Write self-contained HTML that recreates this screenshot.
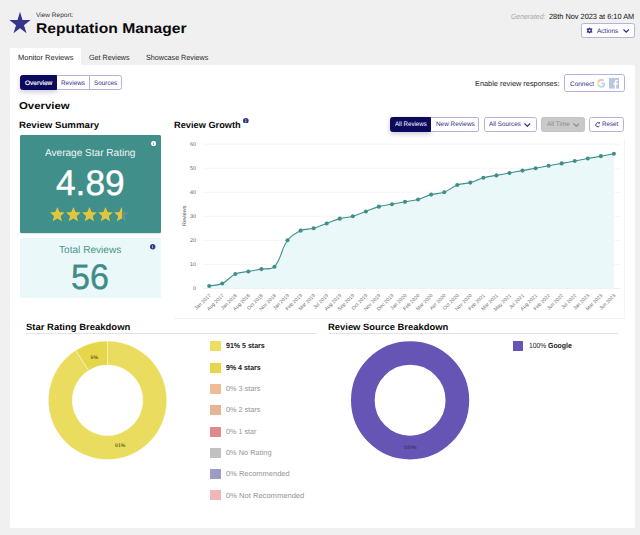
<!DOCTYPE html>
<html lang="en">
<head>
<meta charset="utf-8">
<title>Reputation Manager</title>
<style>
*{box-sizing:border-box;margin:0;padding:0}
html,body{width:640px;height:535px;overflow:hidden;background:#f0f0f0}
body{position:relative;font-family:"Liberation Sans",sans-serif;color:#111}
text{text-rendering:geometricPrecision}
.abs{position:absolute}
.t{position:absolute;white-space:nowrap;line-height:1;transform-origin:0 0;text-rendering:geometricPrecision}
.btn{position:absolute;border:0.7px solid #b4b3dc;background:#fff}
.navy{background:#0c0a5c;border-color:#0c0a5c;box-shadow:0 2px 5px rgba(12,10,92,.22)}
.ax{font-size:5.5px;fill:#666;font-family:"Liberation Sans",sans-serif}
.axx{font-size:5px;fill:#6a6a6a;font-family:"Liberation Sans",sans-serif}
.dl{font-size:5.1px;fill:#2e2c10;font-family:"Liberation Sans",sans-serif}
</style>
</head>
<body>
<svg class="abs" style="left:9.2px;top:10.9px" width="22" height="23.4" viewBox="0 0 22 22" preserveAspectRatio="none"><polygon points="11,0.8 13.5,8.5 21.6,8.5 15,13.3 17.5,21 11,16.2 4.5,21 7,13.3 0.4,8.5 8.5,8.5" fill="#35358c"/></svg>
<div class="t" style="left:35.77px;top:13.10px;font-size:6.39px;color:#333;transform:scaleX(1.0246)">View Report:</div>
<div class="t" style="left:35.89px;top:21.10px;font-size:14.08px;color:#0a0a0a;transform:scaleX(1.1124);font-weight:bold">Reputation Manager</div>
<div class="t" style="left:510.76px;top:13.10px;font-size:7.55px;color:#a8a8a8;transform:scaleX(0.9104);font-style:italic">Generated:</div>
<div class="t" style="left:549.14px;top:13.10px;font-size:7.69px;color:#111;transform:scaleX(0.9582)">28th Nov 2023 at 6:10 AM</div>
<div class="btn" style="left:581.2px;top:23.4px;width:53.5px;height:14.3px;border-radius:2.5px"></div>
<svg class="abs" style="left:585.9px;top:26.9px" width="7.1" height="7.1" viewBox="0 0 24 24"><path fill="#2f2e87" d="M12,1 L14.2,4.3 A8,8 0 0 1 16.6,5.3 L20.5,4.6 L21.9,7 L19.6,10.1 A8,8 0 0 1 19.6,13.9 L21.9,17 L20.5,19.4 L16.6,18.7 A8,8 0 0 1 14.2,19.7 L12,23 L9.800,19.700 A8,8 0 0 1 7.4,18.7 L3.5,19.4 L2.1,17 L4.4,13.9 A8,8 0 0 1 4.4,10.1 L2.1,7 L3.5,4.6 L7.4,5.3 A8,8 0 0 1 9.8,4.3 Z M12,8.600 A3.4,3.4 0 1 0 12,15.400 A3.4,3.4 0 1 0 12,8.600 Z" fill-rule="evenodd"/></svg>
<div class="t" style="left:596.70px;top:29.10px;font-size:6.68px;color:#2f2e87;transform:scaleX(0.9757)">Actions</div>
<svg class="abs" style="left:623.2px;top:28.6px" width="6.4" height="4" viewBox="0 0 6.4 4"><path d="M0.5,0.5 L3.2,3.2 L5.9,0.5" fill="none" stroke="#2f2e87" stroke-width="1.15"/></svg>
<div class="abs" style="left:10px;top:48.1px;width:71.2px;height:18px;background:#fff;border-radius:2px 2px 0 0"></div>
<div class="t" style="left:17.58px;top:54.10px;font-size:7.55px;color:#2a2a2a;transform:scaleX(0.9932)">Monitor Reviews</div>
<div class="t" style="left:89.04px;top:54.10px;font-size:7.55px;color:#2a2a2a;transform:scaleX(0.9496)">Get Reviews</div>
<div class="t" style="left:145.54px;top:54.10px;font-size:7.55px;color:#2a2a2a;transform:scaleX(0.9514)">Showcase Reviews</div>
<div class="abs" style="left:10px;top:65px;width:624.8px;height:463.2px;background:#fff;border-radius:0 2px 2px 2px"></div>
<div class="btn navy" style="left:19.75px;top:75px;width:37.2px;height:14.6px;border-radius:2.5px 0 0 2.5px"></div>
<div class="btn" style="left:56.9px;top:75px;width:32.8px;height:14.6px;border-radius:0;border-left:0;border-right:0"></div>
<div class="btn" style="left:89.1px;top:75px;width:33.3px;height:14.6px;border-radius:0 2.5px 2.5px 0"></div>

<div class="t" style="left:24.50px;top:81.10px;font-size:6.53px;color:#fff;transform:scaleX(1.0028);-webkit-text-stroke:0.15px #fff">Overview</div>
<div class="t" style="left:60.77px;top:81.10px;font-size:6.53px;color:#2f2e87;transform:scaleX(0.9696)">Reviews</div>
<div class="t" style="left:93.94px;top:81.10px;font-size:6.53px;color:#2f2e87;transform:scaleX(0.9720)">Sources</div>
<div class="t" style="left:475.18px;top:80.10px;font-size:7.40px;color:#222;transform:scaleX(0.9979)">Enable review responses:</div>
<div class="btn" style="left:564px;top:74.3px;width:61px;height:18px;border-radius:2.6px;border-width:0.8px;border-color:#b4b3de"></div>
<div class="t" style="left:569.53px;top:82.10px;font-size:6.53px;color:#2f2e87;transform:scaleX(0.9885)">Connect</div>
<svg class="abs" style="left:596.7px;top:79.3px;opacity:.36" width="8.7" height="8.7" viewBox="0 0 18 18"><path d="M17.6,9.2c0-.6-.1-1.2-.2-1.800H9v3.500h4.800a4.100,4.100,0,0,1-1.800,2.700v2.200h2.900A8.800,8.800,0,0,0,17.600,9.200Z" fill="#4285f4"/><path d="M9,18a8.600,8.600,0,0,0,5.900-2.200l-2.900-2.200a5.400,5.400,0,0,1-8-2.800H1v2.300A9,9,0,0,0,9,18Z" fill="#34a853"/><path d="M4,10.700a5.400,5.400,0,0,1,0-3.400V5H1a9,9,0,0,0,0,8Z" fill="#fbbc05"/><path d="M9,3.600a4.900,4.900,0,0,1,3.400,1.300L15,2.300A8.600,8.600,0,0,0,9,0,9,9,0,0,0,1,5L4,7.300A5.400,5.400,0,0,1,9,3.600Z" fill="#ea4335"/></svg>
<svg class="abs" style="left:608.7px;top:78.1px" width="10.5" height="10.6" viewBox="0 0 21 21"><rect width="21" height="21" fill="#b9c4de"/><path d="M14.600,21 V13 h2.700 l0.400,-3.100 h-3.100 v-2 c0,-0.900 0.300,-1.500 1.600,-1.500 h1.600 V3.600 c-0.300,0 -1.300,-0.100 -2.400,-0.100 c-2.400,0 -4,1.500 -4,4.100 v2.300 H8.700 V13 h2.700 v8 z" fill="#fff"/></svg>
<div class="t" style="left:19.47px;top:102.10px;font-size:9.87px;color:#0a0a0a;transform:scaleX(1.1540);font-weight:bold">Overview</div>
<div class="t" style="left:19.34px;top:121.10px;font-size:9.14px;color:#0a0a0a;transform:scaleX(1.0591);font-weight:bold">Review Summary</div>
<div class="t" style="left:174.27px;top:121.10px;font-size:9.14px;color:#0a0a0a;transform:scaleX(1.0116);font-weight:bold">Review Growth</div>
<svg class="abs" style="left:243.2px;top:117.6px" width="5.7" height="5.7" viewBox="0 0 10 10"><circle cx="5" cy="5" r="5" fill="#35358c"/><rect x="4.4" y="4.3" width="1.2" height="3.4" fill="#fff"/><rect x="4.4" y="2.3" width="1.2" height="1.200" fill="#fff"/></svg>
<div class="btn navy" style="left:390px;top:117.1px;width:41.3px;height:14.8px;border-radius:2.5px 0 0 2.5px"></div>
<div class="btn" style="left:431.2px;top:117.1px;width:48px;height:14.8px;border-radius:0 2.5px 2.5px 0;border-left:0"></div>
<div class="btn" style="left:483.5px;top:117.1px;width:53.1px;height:14.8px;border-radius:2.5px"></div>
<div class="btn" style="left:541px;top:117.1px;width:43.75px;height:14.8px;border-radius:2.5px;background:#c9c9c9;border-color:#c4c4c4"></div>
<div class="btn" style="left:589.4px;top:117.1px;width:34.8px;height:14.8px;border-radius:2.5px"></div>
<div class="t" style="left:394.75px;top:122.10px;font-size:6.53px;color:#fff;transform:scaleX(0.9438)">All Reviews</div>
<div class="t" style="left:435.51px;top:122.10px;font-size:6.53px;color:#2f2e87;transform:scaleX(0.9806)">New Reviews</div>
<div class="t" style="left:489.00px;top:122.10px;font-size:6.53px;color:#2f2e87;transform:scaleX(0.9649)">All Sources</div>
<svg class="abs" style="left:524.3px;top:122.8px" width="6.6" height="4" viewBox="0 0 6.6 4"><path d="M0.5,0.5 L3.3,3.300 L6.100,0.500" fill="none" stroke="#2f2e87" stroke-width="1.15"/></svg>
<div class="t" style="left:546.50px;top:122.10px;font-size:6.53px;color:#8c8c8c;transform:scaleX(0.9836)">All Time</div>
<svg class="abs" style="left:572.6px;top:122.8px" width="6.6" height="4" viewBox="0 0 6.6 4"><path d="M0.5,0.5 L3.3,3.300 L6.100,0.500" fill="none" stroke="#8c8c8c" stroke-width="1.15"/></svg>
<svg class="abs" style="left:594.8px;top:122.3px" width="5.6" height="5.6" viewBox="0 0 12 12"><path d="M9.600,8.300 A4.300,4.300 0 1 1 8.600,2.600" fill="none" stroke="#2f2e87" stroke-width="2"/><polygon points="7.2,0.600 11.800,0.600 11.800,5.200" fill="#2f2e87"/></svg>
<div class="t" style="left:602.03px;top:122.10px;font-size:6.53px;color:#2f2e87;transform:scaleX(0.9455)">Reset</div>
<div class="abs" style="left:19.5px;top:135px;width:141.4px;height:98px;background:#418f8a;border-radius:1.5px;box-shadow:0 0.5px 1px rgba(0,0,0,.12)"></div>
<div class="t" style="left:45.20px;top:149.10px;font-size:10.16px;color:#eef6f5;transform:scaleX(0.9909)">Average Star Rating</div>
<div class="t" style="left:55.73px;top:166.10px;font-size:35.56px;color:#fff;transform:scaleX(0.9921);-webkit-text-stroke:0.40px #fff">4.89</div>
<svg class="abs" style="left:150.6px;top:140.6px" width="5.2" height="5.2" viewBox="0 0 10 10"><circle cx="5" cy="5" r="5" fill="#fff"/><rect x="4.4" y="4.3" width="1.2" height="3.4" fill="#408e89"/><rect x="4.4" y="2.3" width="1.2" height="1.200" fill="#408e89"/></svg>
<svg class="abs" style="left:49.6px;top:206.7px" width="81.5" height="15.3" viewBox="0 0 80 15"><defs><linearGradient id="hf"><stop offset="50%" stop-color="#dfc540"/><stop offset="50%" stop-color="#63918d"/></linearGradient></defs><polygon points="7.2,0 9.3,4.9 14.4,5.4 10.500,8.900 11.700,14 7.200,11.300 2.700,14 3.900,8.900 0,5.400 5.100,4.900" transform="translate(0.00,0)" fill="#dfc540"/><polygon points="7.2,0 9.3,4.9 14.4,5.4 10.500,8.900 11.700,14 7.200,11.300 2.700,14 3.900,8.900 0,5.400 5.100,4.900" transform="translate(15.75,0)" fill="#dfc540"/><polygon points="7.2,0 9.3,4.9 14.4,5.4 10.500,8.900 11.700,14 7.200,11.300 2.700,14 3.900,8.900 0,5.400 5.100,4.900" transform="translate(31.50,0)" fill="#dfc540"/><polygon points="7.2,0 9.3,4.9 14.4,5.4 10.500,8.900 11.700,14 7.200,11.300 2.700,14 3.900,8.900 0,5.400 5.100,4.900" transform="translate(47.25,0)" fill="#dfc540"/><polygon points="7.2,0 9.3,4.9 14.4,5.4 10.500,8.900 11.700,14 7.200,11.300 2.700,14 3.900,8.900 0,5.400 5.100,4.900" transform="translate(63.00,0)" fill="url(#hf)"/></svg>
<div class="abs" style="left:19.5px;top:238px;width:141.4px;height:59.6px;background:#eaf8f9;border-radius:1.5px"></div>
<div class="t" style="left:59.00px;top:246.10px;font-size:10.16px;color:#4a9590;transform:scaleX(0.9944)">Total Reviews</div>
<div class="t" style="left:71.36px;top:260.10px;font-size:35.41px;color:#3f8c87;transform:scaleX(0.9622);-webkit-text-stroke:0.40px #3f8c87">56</div>
<svg class="abs" style="left:150.4px;top:244.2px" width="5.4" height="5.4" viewBox="0 0 10 10"><circle cx="5" cy="5" r="5" fill="#35358c"/><rect x="4.4" y="4.3" width="1.2" height="3.4" fill="#fff"/><rect x="4.4" y="2.3" width="1.2" height="1.200" fill="#fff"/></svg>
<div class="abs" style="left:174px;top:139px;width:451px;height:179.6px;border-right:0.6px solid #f3f3f3;border-bottom:0.6px solid #f3f3f3"></div>
<svg class="abs" style="left:0;top:0" width="640" height="535" viewBox="0 0 640 535">
<line x1="203" x2="620.4" y1="288.35" y2="288.35" stroke="#dfdfdf" stroke-width="0.6"/>
<text x="196" y="290.10" text-anchor="end" class="ax">0</text>
<line x1="203" x2="620.4" y1="264.32" y2="264.32" stroke="#ececec" stroke-width="0.6"/>
<text x="196" y="266.07" text-anchor="end" class="ax">10</text>
<line x1="203" x2="620.4" y1="240.28" y2="240.28" stroke="#ececec" stroke-width="0.6"/>
<text x="196" y="242.03" text-anchor="end" class="ax">20</text>
<line x1="203" x2="620.4" y1="216.25" y2="216.25" stroke="#ececec" stroke-width="0.6"/>
<text x="196" y="218.00" text-anchor="end" class="ax">30</text>
<line x1="203" x2="620.4" y1="192.22" y2="192.22" stroke="#ececec" stroke-width="0.6"/>
<text x="196" y="193.97" text-anchor="end" class="ax">40</text>
<line x1="203" x2="620.4" y1="168.18" y2="168.18" stroke="#ececec" stroke-width="0.6"/>
<text x="196" y="169.93" text-anchor="end" class="ax">50</text>
<line x1="203" x2="620.4" y1="144.15" y2="144.15" stroke="#ececec" stroke-width="0.6"/>
<text x="196" y="145.90" text-anchor="end" class="ax">60</text>
<text transform="translate(186.2,215.8) rotate(-90)" text-anchor="middle" class="ax" style="fill:#555;font-size:5.4px">Reviews</text>
<path d="M209.20,285.95 C214.42,284.99 217.55,285.71 222.25,283.54 C228.00,280.90 229.57,276.57 235.31,273.93 C240.01,271.77 243.14,272.49 248.36,271.53 C253.59,270.57 256.20,270.08 261.42,269.12 C266.64,268.16 271.23,270.30 274.47,266.72 C281.68,258.77 280.79,249.59 287.53,240.28 C291.23,235.17 294.84,233.31 300.58,230.67 C305.29,228.51 308.54,229.67 313.64,228.27 C318.98,226.79 321.47,225.38 326.69,223.46 C331.92,221.54 334.40,220.13 339.75,218.65 C344.85,217.25 347.70,217.66 352.80,216.25 C358.15,214.77 360.64,213.37 365.86,211.44 C371.08,209.52 373.57,208.11 378.91,206.64 C384.01,205.23 386.75,205.19 391.97,204.23 C397.19,203.27 399.80,202.79 405.02,201.83 C410.24,200.87 412.98,200.83 418.08,199.43 C423.42,197.95 425.79,196.10 431.13,194.62 C436.23,193.21 439.27,194.03 444.19,192.22 C449.71,190.18 451.72,187.04 457.24,185.01 C462.16,183.20 465.20,184.01 470.30,182.60 C475.64,181.13 478.01,179.27 483.35,177.80 C488.45,176.39 491.18,176.35 496.41,175.39 C501.63,174.43 504.24,173.95 509.46,172.99 C514.68,172.03 517.29,171.55 522.52,170.59 C527.74,169.63 530.35,169.14 535.57,168.18 C540.79,167.22 543.40,166.74 548.63,165.78 C553.85,164.82 556.46,164.34 561.68,163.38 C566.90,162.42 569.51,161.93 574.74,160.97 C579.96,160.01 582.57,159.53 587.79,158.57 C593.01,157.61 595.62,157.13 600.85,156.17 C606.07,155.21 608.68,154.72 613.90,153.76 L613.90,288.35 L209.20,288.35 Z" fill="#eaf8f9"/>
<path d="M209.20,285.95 C214.42,284.99 217.55,285.71 222.25,283.54 C228.00,280.90 229.57,276.57 235.31,273.93 C240.01,271.77 243.14,272.49 248.36,271.53 C253.59,270.57 256.20,270.08 261.42,269.12 C266.64,268.16 271.23,270.30 274.47,266.72 C281.68,258.77 280.79,249.59 287.53,240.28 C291.23,235.17 294.84,233.31 300.58,230.67 C305.29,228.51 308.54,229.67 313.64,228.27 C318.98,226.79 321.47,225.38 326.69,223.46 C331.92,221.54 334.40,220.13 339.75,218.65 C344.85,217.25 347.70,217.66 352.80,216.25 C358.15,214.77 360.64,213.37 365.86,211.44 C371.08,209.52 373.57,208.11 378.91,206.64 C384.01,205.23 386.75,205.19 391.97,204.23 C397.19,203.27 399.80,202.79 405.02,201.83 C410.24,200.87 412.98,200.83 418.08,199.43 C423.42,197.95 425.79,196.10 431.13,194.62 C436.23,193.21 439.27,194.03 444.19,192.22 C449.71,190.18 451.72,187.04 457.24,185.01 C462.16,183.20 465.20,184.01 470.30,182.60 C475.64,181.13 478.01,179.27 483.35,177.80 C488.45,176.39 491.18,176.35 496.41,175.39 C501.63,174.43 504.24,173.95 509.46,172.99 C514.68,172.03 517.29,171.55 522.52,170.59 C527.74,169.63 530.35,169.14 535.57,168.18 C540.79,167.22 543.40,166.74 548.63,165.78 C553.85,164.82 556.46,164.34 561.68,163.38 C566.90,162.42 569.51,161.93 574.74,160.97 C579.96,160.01 582.57,159.53 587.79,158.57 C593.01,157.61 595.62,157.13 600.85,156.17 C606.07,155.21 608.68,154.72 613.90,153.76" fill="none" stroke="#3f8f89" stroke-width="1.1"/>
<circle cx="209.20" cy="285.95" r="2.05" fill="#3f8f89"/>
<circle cx="222.25" cy="283.54" r="2.05" fill="#3f8f89"/>
<circle cx="235.31" cy="273.93" r="2.05" fill="#3f8f89"/>
<circle cx="248.36" cy="271.53" r="2.05" fill="#3f8f89"/>
<circle cx="261.42" cy="269.12" r="2.05" fill="#3f8f89"/>
<circle cx="274.47" cy="266.72" r="2.05" fill="#3f8f89"/>
<circle cx="287.53" cy="240.28" r="2.05" fill="#3f8f89"/>
<circle cx="300.58" cy="230.67" r="2.05" fill="#3f8f89"/>
<circle cx="313.64" cy="228.27" r="2.05" fill="#3f8f89"/>
<circle cx="326.69" cy="223.46" r="2.05" fill="#3f8f89"/>
<circle cx="339.75" cy="218.65" r="2.05" fill="#3f8f89"/>
<circle cx="352.80" cy="216.25" r="2.05" fill="#3f8f89"/>
<circle cx="365.86" cy="211.44" r="2.05" fill="#3f8f89"/>
<circle cx="378.91" cy="206.64" r="2.05" fill="#3f8f89"/>
<circle cx="391.97" cy="204.23" r="2.05" fill="#3f8f89"/>
<circle cx="405.02" cy="201.83" r="2.05" fill="#3f8f89"/>
<circle cx="418.08" cy="199.43" r="2.05" fill="#3f8f89"/>
<circle cx="431.13" cy="194.62" r="2.05" fill="#3f8f89"/>
<circle cx="444.19" cy="192.22" r="2.05" fill="#3f8f89"/>
<circle cx="457.24" cy="185.01" r="2.05" fill="#3f8f89"/>
<circle cx="470.30" cy="182.60" r="2.05" fill="#3f8f89"/>
<circle cx="483.35" cy="177.80" r="2.05" fill="#3f8f89"/>
<circle cx="496.41" cy="175.39" r="2.05" fill="#3f8f89"/>
<circle cx="509.46" cy="172.99" r="2.05" fill="#3f8f89"/>
<circle cx="522.52" cy="170.59" r="2.05" fill="#3f8f89"/>
<circle cx="535.57" cy="168.18" r="2.05" fill="#3f8f89"/>
<circle cx="548.63" cy="165.78" r="2.05" fill="#3f8f89"/>
<circle cx="561.68" cy="163.38" r="2.05" fill="#3f8f89"/>
<circle cx="574.74" cy="160.97" r="2.05" fill="#3f8f89"/>
<circle cx="587.79" cy="158.57" r="2.05" fill="#3f8f89"/>
<circle cx="600.85" cy="156.17" r="2.05" fill="#3f8f89"/>
<circle cx="613.90" cy="153.76" r="2.05" fill="#3f8f89"/>
<text transform="translate(211.10,295.80) rotate(-45)" text-anchor="end" class="axx">Jan 2017</text>
<text transform="translate(224.15,295.80) rotate(-45)" text-anchor="end" class="axx">Aug 2017</text>
<text transform="translate(237.21,295.80) rotate(-45)" text-anchor="end" class="axx">Jan 2018</text>
<text transform="translate(250.26,295.80) rotate(-45)" text-anchor="end" class="axx">Aug 2018</text>
<text transform="translate(263.32,295.80) rotate(-45)" text-anchor="end" class="axx">Oct 2018</text>
<text transform="translate(276.37,295.80) rotate(-45)" text-anchor="end" class="axx">Nov 2018</text>
<text transform="translate(289.43,295.80) rotate(-45)" text-anchor="end" class="axx">Jan 2019</text>
<text transform="translate(302.48,295.80) rotate(-45)" text-anchor="end" class="axx">Feb 2019</text>
<text transform="translate(315.54,295.80) rotate(-45)" text-anchor="end" class="axx">Mar 2019</text>
<text transform="translate(328.59,295.80) rotate(-45)" text-anchor="end" class="axx">Jul 2019</text>
<text transform="translate(341.65,295.80) rotate(-45)" text-anchor="end" class="axx">Aug 2019</text>
<text transform="translate(354.70,295.80) rotate(-45)" text-anchor="end" class="axx">Sep 2019</text>
<text transform="translate(367.76,295.80) rotate(-45)" text-anchor="end" class="axx">Oct 2019</text>
<text transform="translate(380.81,295.80) rotate(-45)" text-anchor="end" class="axx">Nov 2019</text>
<text transform="translate(393.87,295.80) rotate(-45)" text-anchor="end" class="axx">Dec 2019</text>
<text transform="translate(406.92,295.80) rotate(-45)" text-anchor="end" class="axx">Jan 2020</text>
<text transform="translate(419.98,295.80) rotate(-45)" text-anchor="end" class="axx">Feb 2020</text>
<text transform="translate(433.03,295.80) rotate(-45)" text-anchor="end" class="axx">Mar 2020</text>
<text transform="translate(446.09,295.80) rotate(-45)" text-anchor="end" class="axx">Apr 2020</text>
<text transform="translate(459.14,295.80) rotate(-45)" text-anchor="end" class="axx">Oct 2020</text>
<text transform="translate(472.20,295.80) rotate(-45)" text-anchor="end" class="axx">Nov 2020</text>
<text transform="translate(485.25,295.80) rotate(-45)" text-anchor="end" class="axx">Feb 2021</text>
<text transform="translate(498.31,295.80) rotate(-45)" text-anchor="end" class="axx">Mar 2021</text>
<text transform="translate(511.36,295.80) rotate(-45)" text-anchor="end" class="axx">May 2021</text>
<text transform="translate(524.42,295.80) rotate(-45)" text-anchor="end" class="axx">Jul 2021</text>
<text transform="translate(537.47,295.80) rotate(-45)" text-anchor="end" class="axx">Aug 2021</text>
<text transform="translate(550.53,295.80) rotate(-45)" text-anchor="end" class="axx">Feb 2022</text>
<text transform="translate(563.58,295.80) rotate(-45)" text-anchor="end" class="axx">Jun 2022</text>
<text transform="translate(576.64,295.80) rotate(-45)" text-anchor="end" class="axx">Jul 2022</text>
<text transform="translate(589.69,295.80) rotate(-45)" text-anchor="end" class="axx">Jan 2023</text>
<text transform="translate(602.75,295.80) rotate(-45)" text-anchor="end" class="axx">Mar 2023</text>
<text transform="translate(615.80,295.80) rotate(-45)" text-anchor="end" class="axx">Jun 2023</text>
</svg>
<div class="t" style="left:26.34px;top:323.10px;font-size:9.14px;color:#0a0a0a;transform:scaleX(1.0389);font-weight:bold">Star Rating Breakdown</div>
<div class="abs" style="left:26px;top:332.7px;width:289.5px;height:0.8px;background:#e3e3e3"></div>
<div class="t" style="left:328.26px;top:323.10px;font-size:9.14px;color:#0a0a0a;transform:scaleX(1.0312);font-weight:bold">Review Source Breakdown</div>
<div class="abs" style="left:328.75px;top:332.7px;width:289.5px;height:0.8px;background:#e3e3e3"></div>
<svg class="abs" style="left:0;top:0" width="640" height="535" viewBox="0 0 640 535">
<path d="M107.55,341.05 A59.25,59.25 0 1 1 75.80,350.27 L88.66,370.54 A35.25,35.25 0 1 0 107.55,365.05 Z" fill="#eadc5e" stroke="#fff" stroke-width="0.4"/>
<path d="M75.80,350.27 A59.25,59.25 0 0 1 107.55,341.05 L107.55,365.05 A35.25,35.25 0 0 0 88.66,370.54 Z" fill="#e6d64a" stroke="#fff" stroke-width="0.4"/>
<text x="94.3" y="359.2" text-anchor="middle" class="dl">9%</text>
<text x="120.2" y="447.4" text-anchor="middle" class="dl">91%</text>
<circle cx="410.1" cy="400.30" r="47.28" fill="none" stroke="#6655b5" stroke-width="23.65"/>
<text x="410.1" y="449.2" text-anchor="middle" class="dl" style="fill:#2a2350">100%</text>
</svg>
<div class="abs" style="left:210.4px;top:341.3px;width:10.3px;height:10px;background:#ebde62"></div>
<div class="t" style="left:225.66px;top:342.10px;font-size:7.40px;color:#222;transform:scaleX(0.9520);font-weight:bold">91% 5 stars</div>
<div class="abs" style="left:210.4px;top:362.6px;width:10.3px;height:10px;background:#e6d648"></div>
<div class="t" style="left:225.66px;top:364.10px;font-size:7.40px;color:#222;transform:scaleX(0.9472);font-weight:bold">9% 4 stars</div>
<div class="abs" style="left:210.4px;top:383.9px;width:10.3px;height:10px;background:#f0bc96"></div>
<div class="t" style="left:225.85px;top:385.10px;font-size:7.40px;color:#949494;transform:scaleX(0.9862)">0% 3 stars</div>
<div class="abs" style="left:210.4px;top:405.2px;width:10.3px;height:10px;background:#e6b594"></div>
<div class="t" style="left:225.85px;top:406.10px;font-size:7.40px;color:#949494;transform:scaleX(0.9862)">0% 2 stars</div>
<div class="abs" style="left:210.4px;top:426.5px;width:10.3px;height:10px;background:#e08b8b"></div>
<div class="t" style="left:225.86px;top:428.10px;font-size:7.40px;color:#949494;transform:scaleX(0.9765)">0% 1 star</div>
<div class="abs" style="left:210.4px;top:447.8px;width:10.3px;height:10px;background:#c1c1c1"></div>
<div class="t" style="left:225.85px;top:449.10px;font-size:7.40px;color:#949494;transform:scaleX(0.9983)">0% No Rating</div>
<div class="abs" style="left:210.4px;top:469.1px;width:10.3px;height:10px;background:#9c9cc9"></div>
<div class="t" style="left:225.85px;top:470.10px;font-size:7.40px;color:#949494;transform:scaleX(1.0125)">0% Recommended</div>
<div class="abs" style="left:210.4px;top:490.4px;width:10.3px;height:10px;background:#f1b6ba"></div>
<div class="t" style="left:225.84px;top:492.10px;font-size:7.40px;color:#949494;transform:scaleX(1.0244)">0% Not Recommended</div>
<div class="abs" style="left:513px;top:341.2px;width:10.3px;height:10px;background:#6655b5"></div>
<div class="t" style="left:528.63px;top:342.10px;font-size:7.40px;color:#222;transform:scaleX(0.9111)">100%</div>
<div class="t" style="left:548.07px;top:342.10px;font-size:7.40px;color:#222;transform:scaleX(0.9360);font-weight:bold">Google</div>
</body>
</html>
